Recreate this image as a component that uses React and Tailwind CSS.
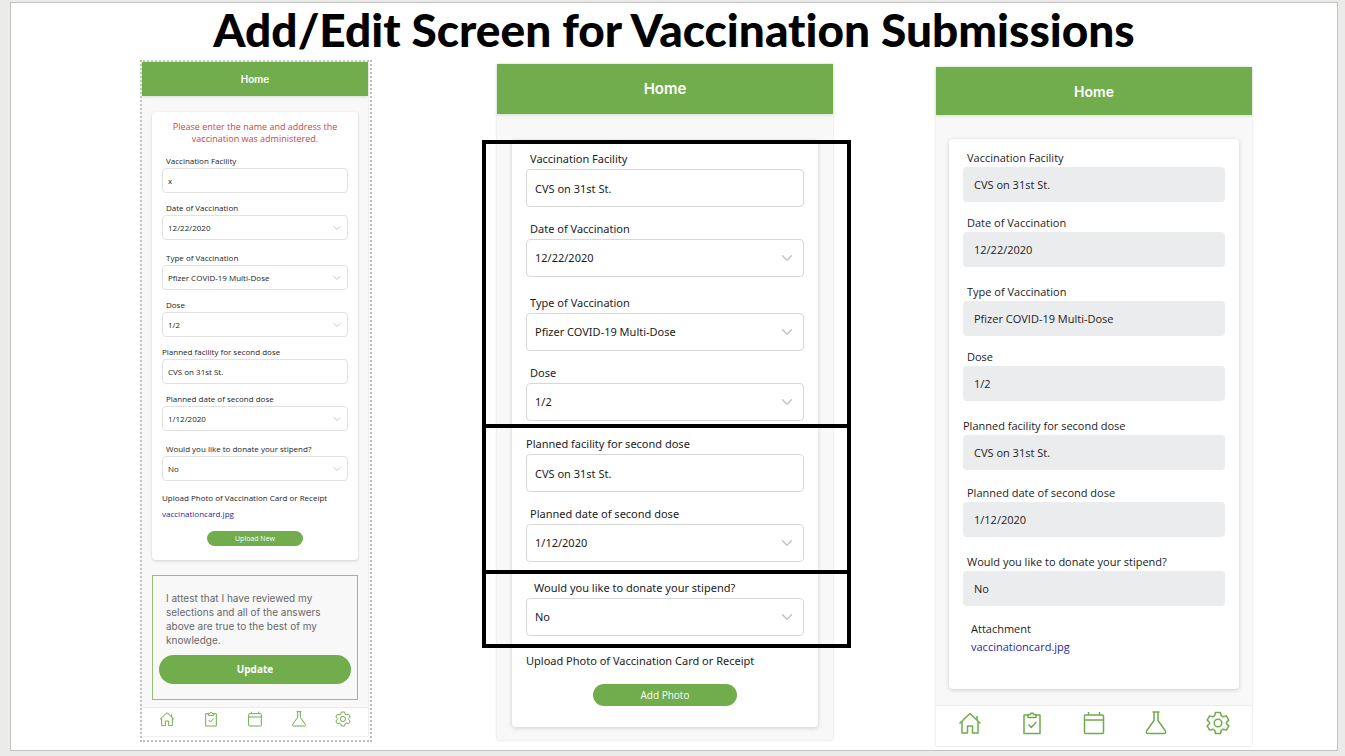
import React from 'react';
import clsx from 'clsx';
import { ChevronDown } from 'lucide-react';

const VACCINE = 'Pfizer COVID-19 Multi-Dose';

// Sizes for the three mockups, which share one form at different scales
const sizes = {
  small: {
    header: 'h-[34px] text-[10px]',
    label: 'h-[14px] text-[8px] leading-[14px]',
    control: 'h-[25px] text-[8px] rounded-sm pl-[5px] border border-[#e2e2e2] bg-white',
    chevron: 'right-[5px] size-3',
    near: 'mt-2',
    mid: 'mt-2',
    far: 'mt-[11px]',
    nav: 'h-[29px] px-[17px] pt-[3px]',
    icon: 'size-4'
  },
  large: {
    header: 'h-[50px] text-[15px]',
    label: "h-5 font-['Noto_Sans',sans-serif] text-[11px] leading-5",
    control: "h-[38px] font-['Noto_Sans',sans-serif] text-[11px] rounded pl-2 border border-[#d8d8d8] bg-white",
    chevron: 'right-2 size-[18px]',
    near: 'mt-3',
    mid: 'mt-3',
    far: 'mt-4',
    nav: '',
    icon: ''
  },
  medium: {
    header: 'h-12 text-[14px]',
    label: 'h-[18px] text-[11px] leading-[18px]',
    control: 'h-[35px] text-[11px] rounded pl-[11px] bg-[#ebecee]',
    chevron: '',
    near: 'mt-3',
    mid: 'mt-3.5',
    far: 'mt-4',
    nav: 'h-[41px] px-[22px] pt-[5px]',
    icon: 'size-6'
  }
};

const indents = {
  none: '',
  normal: 'pl-1',
  wide: 'pl-2'
};

const Field = ({ id, label, value, size, gap, indent = 'normal', type = 'select' }) => {
  const s = sizes[size];
  const fieldId = `${size}-${id}`;

  return (
    <div className={gap && s[gap]}>
      <label htmlFor={fieldId} className={clsx('block whitespace-nowrap', s.label, indents[indent])}>
        {label}
      </label>
      <div className="relative">
        {type === 'select' ? (
          <>
            <select id={fieldId} defaultValue={value} className={clsx('block w-full appearance-none', s.control)}>
              <option>{value}</option>
            </select>
            <ChevronDown
              strokeWidth={2}
              className={clsx('pointer-events-none absolute top-1/2 -translate-y-1/2 text-[#c4c4c4]', s.chevron)}
            />
          </>
        ) : (
          <input
            id={fieldId}
            type="text"
            defaultValue={value}
            readOnly={type === 'readonly'}
            className={clsx('block w-full', s.control)}
          />
        )}
      </div>
    </div>
  );
};

const navItems = [
  {
    name: 'Home',
    path: (
      <>
        <path d="M1.5 12.5 12 2.5l10.5 10" />
        <path d="M4 10.5V22h5.5v-7h5v7H20V10.5M19 9V5" />
      </>
    )
  },
  {
    name: 'Tasks',
    path: (
      <>
        <path d="M8 4H4v18.500h16V4h-4" />
        <path d="M8 3.500h2.500a1.500 1.500 0 0 1 3 0H16v3H8zM8.500 13.500l2.800 3 5-5.500" />
      </>
    )
  },
  {
    name: 'Calendar',
    path: (
      <>
        <rect x="2.500" y="4" width="19" height="18.500" rx="1" />
        <path d="M2.500 9h19M6.500 4V1M17.500 4V1" />
      </>
    )
  },
  {
    name: 'Lab',
    path: <path d="M8.500 1h7M10 1v8.500L2.500 20q-.8 2.500 1.500 2.500h16q2.300 0 1.500-2.500L14 9.500V1" />
  },
  {
    name: 'Settings',
    path: (
      <>
        <circle cx="12" cy="12" r="3.800" />
        <path d="M9.500 1.500h5l.8 3.200 1.900 1.100 3.200-.9 2.400 4.200-2.300 2.200v1.400l2.300 2.200-2.400 4.200-3.200-.9-1.900 1.100-.8 3.200h-5l-.8-3.200-1.900-1.100-3.200.9-2.400-4.200 2.300-2.200v-1.400L1.200 9.100l2.400-4.200 3.200.9 1.900-1.100z" />
      </>
    )
  }
];

const BottomNav = ({ size }) => (
  <nav className={clsx('flex items-start justify-between border-t border-[#ececec] bg-white', sizes[size].nav)}>
    {navItems.map((item) => (
      <a key={item.name} href="#" aria-label={item.name} className="block text-[#71ab4d]">
        <svg
          viewBox="0 0 24 24"
          fill="none"
          stroke="currentColor"
          strokeWidth="1.5"
          strokeLinejoin="round"
          className={sizes[size].icon}
        >
          {item.path}
        </svg>
      </a>
    ))}
  </nav>
);

const Phone = ({ size, children, className }) => (
  <div className={clsx('flex flex-col bg-[#f8f8f8] shadow-[0_0_2px_#d0d0d0]', className)}>
    <header
      className={clsx(
        "flex items-center justify-center bg-[#71ac4d] font-['Inter',sans-serif] font-semibold text-white shadow-[0_1px_3px_#d5dfcf]",
        sizes[size].header
      )}
    >
      Home
    </header>
    {children}
  </div>
);

// Black outline around a group of fields, wider than the card it sits on
const Group = ({ children, className }) => (
  <section className={clsx('relative', className)}>
    {children}
    <div className="pointer-events-none absolute top-0 -right-[33px] -bottom-1 -left-[30px] border-4 border-black" />
  </section>
);

const EditScreen = () => (
  <div className="border-2 border-dotted border-[#bdbdbd] pr-0.5 pb-1">
    <Phone size="small">
      <main className="mx-[10px] mt-4 rounded bg-white px-[10px] pt-[9px] pb-[14px] shadow-[0_1px_3px_#d0d0d0]">
        <p className="mb-[9px] text-center text-[9px] leading-3 text-[#cf3f48]">
          Please enter the name and address the
          <br />
          vaccination was administered.
        </p>
        <Field size="small" id="facility" label="Vaccination Facility" value="x" type="text" />
        <Field size="small" id="date" label="Date of Vaccination" value="12/22/2020" gap="near" />
        <Field size="small" id="type" label="Type of Vaccination" value={VACCINE} gap="far" />
        <Field size="small" id="dose" label="Dose" value="1/2" gap="near" />
        <Field size="small" id="facility2" label="Planned facility for second dose" value="CVS on 31st St." gap="near" indent="none" type="text" />
        <Field size="small" id="date2" label="Planned date of second dose" value="1/12/2020" gap="near" />
        <Field size="small" id="stipend" label="Would you like to donate your stipend?" value="No" gap="far" />
        <p className="mt-[10px] text-[8px] leading-[14px] whitespace-nowrap">Upload Photo of Vaccination Card or Receipt</p>
        <a href="#" className="mt-0.5 block text-[8px] leading-[14px] text-[#2a1fa8]">vaccinationcard.jpg</a>
        <button type="button" className="mx-auto mt-[10px] block h-[15px] w-24 rounded-full bg-[#71ac4d] text-[7px] leading-[15px] text-white">
          Upload New
        </button>
      </main>
      <section className="mx-[10px] mt-[15px] mb-[7px] border border-[#93bf78] px-[6px] pt-[15px] pb-[15px]">
        <p className="px-[7px] font-['Inter',sans-serif] text-[10px] leading-[14px] text-[#686868]">
          I attest that I have reviewed my
          <br />
          selections and all of the answers
          <br />
          above are true to the best of my
          <br />
          knowledge.
        </p>
        <button type="button" className="mt-2 block h-[29px] w-full rounded-full bg-[#71ac4d] text-[10px] font-bold text-white">
          Update
        </button>
      </section>
      <BottomNav size="small" />
    </Phone>
  </div>
);

const AddScreen = () => (
  <Phone size="large" className="mt-1 pb-[13px]">
    <main className="mx-[15px] mt-[26px] rounded bg-white pb-[21px] shadow-[0_1px_4px_#cccccc]">
      <Group className="px-[14px] pt-[9px] pb-[3px]">
        <Field size="large" id="facility" label="Vaccination Facility" value="CVS on 31st St." type="text" />
        <Field size="large" id="date" label="Date of Vaccination" value="12/22/2020" gap="near" />
        <Field size="large" id="type" label="Type of Vaccination" value={VACCINE} gap="far" />
        <Field size="large" id="dose" label="Dose" value="1/2" gap="near" />
      </Group>
      <Group className="px-[14px] pt-[10px] pb-2">
        <Field size="large" id="facility2" label="Planned facility for second dose" value="CVS on 31st St." indent="none" type="text" />
        <Field size="large" id="date2" label="Planned date of second dose" value="1/12/2020" gap="near" />
      </Group>
      <Group className="px-[14px] pt-2 pb-2">
        <Field size="large" id="stipend" label="Would you like to donate your stipend?" value="No" indent="wide" />
      </Group>
      <p className="mt-[7px] px-[14px] font-['Noto_Sans',sans-serif] text-[11px] leading-5 whitespace-nowrap">
        Upload Photo of Vaccination Card or Receipt
      </p>
      <button type="button" className="mx-auto mt-[13px] block h-[22px] w-36 rounded-full bg-[#71ac4d] text-[10px] text-white">
        Add Photo
      </button>
    </main>
  </Phone>
);

const ViewScreen = () => (
  <Phone size="medium" className="mt-[7px]">
    <main className="mx-[13px] mt-6 mb-4 rounded bg-white px-[14px] pt-[10px] pb-[33px] shadow-[0_1px_4px_#cccccc]">
      <Field size="medium" id="facility" label="Vaccination Facility" value="CVS on 31st St." type="readonly" />
      <Field size="medium" id="date" label="Date of Vaccination" value="12/22/2020" gap="near" type="readonly" />
      <Field size="medium" id="type" label="Type of Vaccination" value={VACCINE} gap="far" type="readonly" />
      <Field size="medium" id="dose" label="Dose" value="1/2" gap="near" type="readonly" />
      <Field size="medium" id="facility2" label="Planned facility for second dose" value="CVS on 31st St." gap="far" indent="none" type="readonly" />
      <Field size="medium" id="date2" label="Planned date of second dose" value="1/12/2020" gap="mid" type="readonly" />
      <Field size="medium" id="stipend" label="Would you like to donate your stipend?" value="No" gap="far" type="readonly" />
      <div className="mt-[14px] pl-2 text-[11px] leading-[18px]">
        <p>Attachment</p>
        <a href="#" className="block text-[#2a1fa8]">vaccinationcard.jpg</a>
      </div>
    </main>
    <BottomNav size="medium" />
  </Phone>
);

const App = () => {
  return (
    <div className="flex min-h-screen flex-col bg-[#ebebea] pt-0.5 pr-[7px] pb-[5px] pl-[10px] font-['Open_Sans',sans-serif] text-[#1c1c1c]">
      <div className="grow border border-[#c2c2c2] bg-white">
        <h1 className="h-[57px] text-center font-['Lato',sans-serif] text-[46px] leading-[54px] font-black text-black [font-variant-ligatures:none]">
          Add/Edit Screen for Vaccination Submissions
        </h1>
        <div className="grid grid-cols-[129fr_232fr_125fr_336fr_103fr_316fr_85fr] items-start">
          <div className="col-start-2 min-w-0">
            <EditScreen />
          </div>
          <div className="col-start-4 min-w-0">
            <AddScreen />
          </div>
          <div className="col-start-6 min-w-0">
            <ViewScreen />
          </div>
        </div>
      </div>
    </div>
  );
};

export default App;
